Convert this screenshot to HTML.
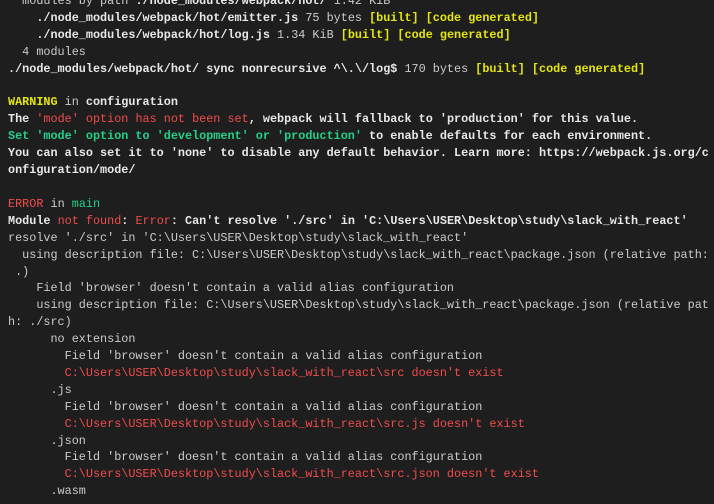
<!DOCTYPE html>
<html><head><meta charset="utf-8"><style>
html,body{margin:0;padding:0;background:#1e1e1e;width:714px;height:504px;overflow:hidden}
pre{margin:0;padding:0 0 0 8px;position:relative;top:-7px;font-family:"Liberation Mono",monospace;font-size:11.8px;line-height:16.9px;color:#cccccc;white-space:pre}
b{color:#e8e8e8}
.y{color:#e5e510;font-weight:bold}
.r{color:#f14c4c}
.g{color:#23d18b}
b.g{color:#23d18b}
</style></head><body><pre>  modules by path <b>./node_modules/webpack/hot/</b> 1.42 KiB
    <b>./node_modules/webpack/hot/emitter.js</b> 75 bytes <span class="y">[built]</span> <span class="y">[code generated]</span>
    <b>./node_modules/webpack/hot/log.js</b> 1.34 KiB <span class="y">[built]</span> <span class="y">[code generated]</span>
  4 modules
<b>./node_modules/webpack/hot/ sync nonrecursive ^\.\/log$</b> 170 bytes <span class="y">[built]</span> <span class="y">[code generated]</span>

<span class="y">WARNING</span> in <b>configuration</b>
<b>The </b><span class="r">'mode' option has not been set</span><b>, webpack will fallback to 'production' for this value.</b>
<b class="g">Set 'mode' option to 'development' or 'production'</b><b> to enable defaults for each environment.</b>
<b>You can also set it to 'none' to disable any default behavior. Learn more: https://webpack.js.org/c
onfiguration/mode/</b>

<span class="r">ERROR</span> in <span class="g">main</span>
<b>Module </b><span class="r">not found</span><b>: </b><span class="r">Error</span><b>: Can't resolve './src' in 'C:\Users\USER\Desktop\study\slack_with_react'</b>
resolve './src' in 'C:\Users\USER\Desktop\study\slack_with_react'
  using description file: C:\Users\USER\Desktop\study\slack_with_react\package.json (relative path:
 .)
    Field 'browser' doesn't contain a valid alias configuration
    using description file: C:\Users\USER\Desktop\study\slack_with_react\package.json (relative pat
h: ./src)
      no extension
        Field 'browser' doesn't contain a valid alias configuration
        <span class="r">C:\Users\USER\Desktop\study\slack_with_react\src doesn't exist</span>
      .js
        Field 'browser' doesn't contain a valid alias configuration
        <span class="r">C:\Users\USER\Desktop\study\slack_with_react\src.js doesn't exist</span>
      .json
        Field 'browser' doesn't contain a valid alias configuration
        <span class="r">C:\Users\USER\Desktop\study\slack_with_react\src.json doesn't exist</span>
      .wasm
</pre></body></html>
